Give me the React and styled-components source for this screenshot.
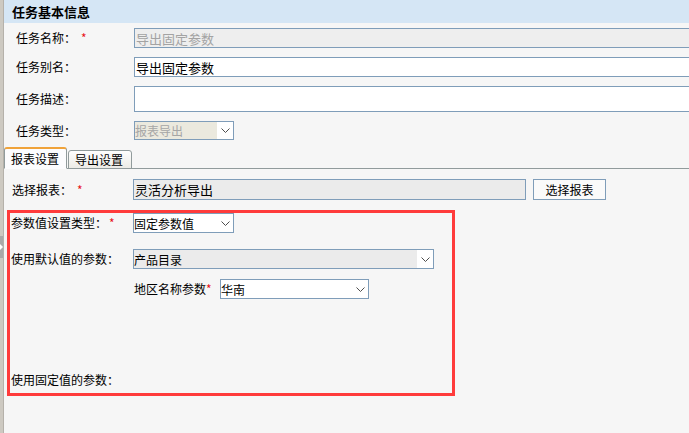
import React from 'react';
import styled, { createGlobalStyle } from 'styled-components';

const GlobalStyle = createGlobalStyle`
  html, body {
    margin: 0;
    padding: 0;
    background: #f6f6f6;
    overflow: hidden;
  }
  body {
    font-family: "Noto Sans CJK SC", "Liberation Sans", sans-serif;
    color: #000;
  }
  * { box-sizing: border-box; }
`;

const Page = styled.div`
  display: flex;
  width: 689px;
  height: 433px;
  overflow: hidden;
  background: #f6f6f6;
`;

const Splitter = styled.div`
  flex: 0 0 3px;
  background: #cdc9c1;
  border-right: 1px solid #b5b1aa;
  padding-top: 236px;
`;

const SplitHandle = styled.div`
  width: 3px;
  height: 22px;
  background: #a9a9a9;
  display: flex;
  align-items: center;
`;

const Main = styled.div`
  flex: 1;
  min-width: 0;
  overflow: hidden;
`;

const SectionHeader = styled.div`
  height: 23px;
  background: #d5e6f5;
  padding-left: 8px;
  display: flex;
  align-items: center;
  font-size: 13px;
  font-weight: bold;
`;

const BasicForm = styled.div`
  display: flex;
  flex-direction: column;
  gap: 9px;
  padding-top: 5px;
`;

const Row = styled.div`
  display: flex;
  align-items: center;
  height: ${({ h }) => h || 20}px;
  margin-top: ${({ mt }) => mt || 0}px;
  white-space: nowrap;
`;

const Label = styled.div`
  flex: 0 0 ${({ w }) => w}px;
  padding-left: ${({ pl }) => pl || 0}px;
  font-size: 12px;
  line-height: 14px;
`;

const Star = styled.span`
  color: #e8141b;
  margin-left: ${({ gap }) => (gap === undefined ? 5 : gap)}px;
`;

const TextInput = styled.div`
  flex: 0 0 ${({ w }) => w}px;
  height: 100%;
  border: 1px solid #7f9db9;
  background: ${({ bg }) => bg || '#fff'};
  color: ${({ dim }) => (dim ? '#a3a3a3' : '#000')};
  font-size: 13px;
  line-height: 17px;
  padding: 0 1px;
  display: flex;
  align-items: center;
`;

const Select = styled.div`
  flex: 0 0 ${({ w }) => w}px;
  height: 100%;
  border: 1px solid #7f9db9;
  background: #fff;
  display: flex;
  font-size: 12px;
`;

const SelectValue = styled.div`
  flex: 1;
  background: ${({ bg }) => bg || '#fff'};
  color: ${({ dim }) => (dim ? '#a6a6a6' : '#000')};
  display: flex;
  align-items: center;
`;

const SelectArrow = styled.div`
  flex: 0 0 16px;
  display: flex;
  align-items: center;
  justify-content: center;
  background: #fff;
`;

const Chevron = () => (
  <svg width="9" height="5" viewBox="0 0 9 5">
    <polyline points="0.5,0.5 4.5,4.5 8.5,0.5" fill="none" stroke="#4d4d4d" strokeWidth="1" />
  </svg>
);

const Dropdown = ({ w, value, bg, dim }) => (
  <Select w={w}>
    <SelectValue bg={bg} dim={dim}>{value}</SelectValue>
    <SelectArrow>
      <Chevron />
    </SelectArrow>
  </Select>
);

const TabBar = styled.div`
  display: flex;
  align-items: flex-end;
  height: 22px;
  margin-top: 7px;
  border-bottom: 1px solid #919b9c;
`;

const Tab = styled.div`
  width: ${({ w }) => w}px;
  height: ${({ active }) => (active ? 22 : 19)}px;
  margin-bottom: -1px;
  margin-right: 1px;
  border: 1px solid #919b9c;
  border-top: ${({ active }) => (active ? '2px solid #f0a33a' : '1px solid #919b9c')};
  border-bottom: ${({ active }) => (active ? '1px solid #fcfcfe' : '1px solid #919b9c')};
  border-radius: 3px 3px 0 0;
  background: ${({ active }) => (active ? '#fcfcfe' : 'linear-gradient(#fefefe, #ecebe6)')};
  font-size: 12px;
  display: flex;
  align-items: center;
  padding-left: 6px;
`;

const TabContent = styled.div`
  padding: 10px 0 0 3px;
`;

const Button = styled.div`
  flex: 0 0 73px;
  height: 21px;
  margin-left: 7px;
  border: 1px solid #7f9db9;
  background: #fafafa;
  font-size: 12px;
  display: flex;
  align-items: center;
  justify-content: center;
`;

const ParamBox = styled.div`
  width: 448px;
  height: 186px;
  margin-top: 10px;
  border: 3px solid #ff3b3b;
  display: flex;
  flex-direction: column;
`;

const Spacer = styled.div`
  flex: 1;
`;

export default function App() {
  return (
    <>
      <GlobalStyle />
      <Page>
        <Splitter>
          <SplitHandle>
            <svg width="3" height="6" viewBox="0 0 3 6">
              <polygon points="0,0 3,3 0,6" fill="#fff" />
            </svg>
          </SplitHandle>
        </Splitter>
        <Main>
          <SectionHeader>任务基本信息</SectionHeader>
          <BasicForm>
            <Row>
              <Label w={130} pl={12}>任务名称：<Star>*</Star></Label>
              <TextInput w={600} bg="#eeeeee" dim>导出固定参数</TextInput>
            </Row>
            <Row>
              <Label w={130} pl={12}>任务别名：</Label>
              <TextInput w={600}>导出固定参数</TextInput>
            </Row>
            <Row h={26}>
              <Label w={130} pl={12}>任务描述：</Label>
              <TextInput w={600} />
            </Row>
            <Row h={19}>
              <Label w={130} pl={12}>任务类型：</Label>
              <Dropdown w={100} value="报表导出" bg="#ebe9de" dim />
            </Row>
          </BasicForm>

          <TabBar>
            <Tab w={63} active>报表设置</Tab>
            <Tab w={64}>导出设置</Tab>
          </TabBar>

          <TabContent>
            <Row h={21}>
              <Label w={126} pl={5}>选择报表：<Star>*</Star></Label>
              <TextInput w={393} bg="#ebebeb">灵活分析导出</TextInput>
              <Button>选择报表</Button>
            </Row>

            <ParamBox>
              <Row>
                <Label w={123} pl={1}>参数值设置类型：<Star gap={2}>*</Star></Label>
                <Dropdown w={101} value="固定参数值" />
              </Row>
              <Row mt={16}>
                <Label w={123} pl={1}>使用默认值的参数：</Label>
                <Dropdown w={301} value="产品目录" bg="#ebebeb" />
              </Row>
              <Row mt={10}>
                <Label w={210} pl={124}>地区名称参数<Star gap={0}>*</Star></Label>
                <Dropdown w={149} value="华南" />
              </Row>
              <Spacer />
              <Row>
                <Label w={200} pl={1}>使用固定值的参数：</Label>
              </Row>
              <Row h={3} />
            </ParamBox>
          </TabContent>
        </Main>
      </Page>
    </>
  );
}
